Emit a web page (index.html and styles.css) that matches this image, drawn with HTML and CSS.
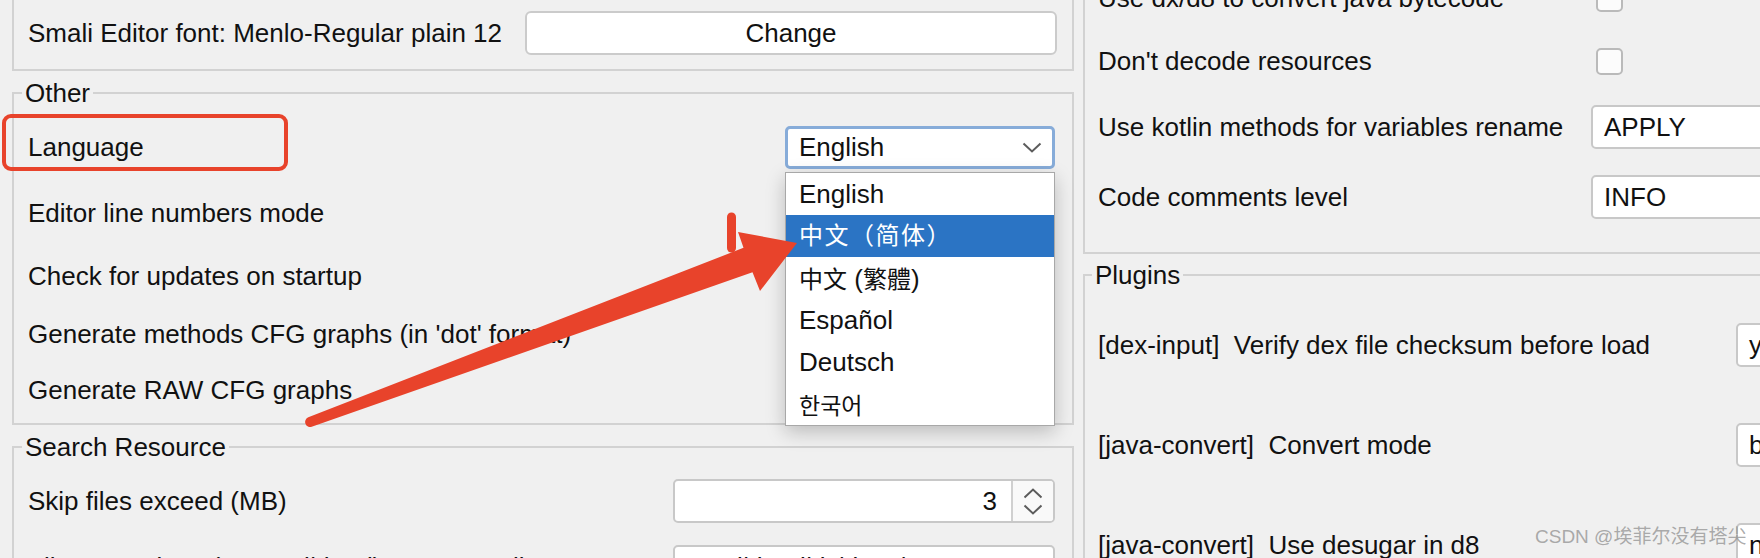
FILE: index.html
```html
<!DOCTYPE html>
<html lang="en">
<head>
<meta charset="utf-8">
<title>Preferences</title>
<link rel="stylesheet" href="styles.css">
</head>
<body>
<div class="screen">
  <div class="col-left">
    <div class="group group-cut">
      <div class="row h66">
        <span class="label">Smali Editor font: Menlo-Regular plain 12</span>
        <button class="btn">Change</button>
      </div>
    </div>

    <fieldset class="group">
      <legend>Other</legend>
      <div class="row h66">
        <span class="label">Language</span>
        <div class="combo-wrap">
          <div class="combo focus"><span>English</span>
            <svg class="chev" width="20" height="11" viewBox="0 0 20 11"><polyline points="1.5,1.5 10,9.5 18.5,1.5"/></svg>
          </div>
          <ul class="popup">
            <li>English</li>
            <li class="sel cjk wide" lang="zh-Hans">中文（简体）</li>
            <li lang="zh-Hant"><span class="cjk tc">中文</span> (<span class="cjk tc">繁體</span>)</li>
            <li>Español</li>
            <li>Deutsch</li>
            <li class="cjk kr" lang="ko">한국어</li>
          </ul>
        </div>
      </div>
      <div class="row h66">
        <span class="label">Editor line numbers mode</span>
        <div class="combo"></div>
      </div>
      <div class="row h60">
        <span class="label">Check for updates on startup</span>
        <span class="check"></span>
      </div>
      <div class="row h56">
        <span class="label">Generate methods CFG graphs (in 'dot' format)</span>
        <span class="check"></span>
      </div>
      <div class="row h56">
        <span class="label">Generate RAW CFG graphs</span>
        <span class="check"></span>
      </div>
    </fieldset>

    <fieldset class="group">
      <legend>Search Resource</legend>
      <div class="row h66">
        <span class="label">Skip files exceed (MB)</span>
        <div class="spinner">
          <span class="spin-field">3</span>
          <span class="spin-btns">
            <svg width="20" height="11" viewBox="0 0 20 11"><polyline points="1.5,9.5 10,1.5 18.5,9.5"/></svg>
            <svg width="20" height="11" viewBox="0 0 20 11"><polyline points="1.5,1.5 10,9.5 18.5,1.5"/></svg>
          </span>
        </div>
      </div>
      <div class="row h66">
        <span class="label">File Extensions (ex: .xml|.html), * means all</span>
        <div class="tf">.xml|.html|.js|.json|.txt</div>
      </div>
    </fieldset>
  </div>

  <div class="col-right">
    <div class="group group-top-r">
      <div class="rrow h60">
        <span class="label">Use dx/d8 to convert java bytecode</span>
        <span class="check"></span>
      </div>
      <div class="rrow h66">
        <span class="label">Don't decode resources</span>
        <span class="check"></span>
      </div>
      <div class="rrow h66">
        <span class="label">Use kotlin methods for variables rename</span>
        <div class="combo combo-r"><span>APPLY</span></div>
      </div>
      <div class="rrow h66 mt4">
        <span class="label">Code comments level</span>
        <div class="combo combo-r"><span>INFO</span></div>
      </div>
    </div>

    <fieldset class="group group-plugins">
      <legend>Plugins</legend>
      <div class="rrow h100">
        <span class="label">[dex-input]  Verify dex file checksum before load</span>
        <div class="combo combo-r"><span>yes</span></div>
      </div>
      <div class="rrow h100">
        <span class="label">[java-convert]  Convert mode</span>
        <div class="combo combo-r"><span>both</span></div>
      </div>
      <div class="rrow h100">
        <span class="label">[java-convert]  Use desugar in d8</span>
        <div class="combo combo-r"><span>no</span></div>
      </div>
    </fieldset>
  </div>
</div>

<div class="mark-box"></div>
<svg class="mark-arrow" width="1760" height="558" viewBox="0 0 1760 558">
  <path d="M308.3,417.3 L743.5,247.8 L738,232 L797,243 L760,291 L752.5,272.2 L311.7,426.7 A5,5 0 0 1 308.3,417.3 Z"/>
  <line x1="731.5" y1="217" x2="731.5" y2="248"/>
</svg>
<div class="watermark">CSDN @埃菲尔没有塔尖</div>
</body>
</html>
```

FILE: styles.css
```css
* { box-sizing: border-box; }

html, body { margin: 0; padding: 0; }

body {
  position: relative;
  width: 1760px;
  height: 558px;
  overflow: hidden;
  background: #f0f0f0;
  font-family: "Liberation Sans", Arial, "Noto Sans CJK SC", sans-serif;
  font-size: 26px;
  color: #111111;
}

.screen {
  display: flex;
  align-items: flex-start;
  padding-left: 12px;
}

.col-left { flex: none; width: 1062px; }
.col-right { flex: none; width: 900px; margin-left: 9px; margin-top: -32px; }

/* groups */
.group {
  margin: 0;
  min-width: 0;
  border: 2px solid #d2d2d2;
}
.group-cut {
  border-top: none;
  padding: 0 17px 3px 14px;
}
fieldset.group {
  margin-top: 9px;
  padding: 8px 17px 5px 14px;
}
legend {
  margin-left: -6px;
  padding: 0 3px;
  font-size: 26px;
  line-height: 26px;
}
.group-top-r {
  border-top: none;
  padding: 0 0 22px 13px;
}
fieldset.group-plugins {
  margin-top: 8px;
  padding: 7px 0 0 13px;
}

/* rows */
.row {
  display: flex;
  align-items: center;
  justify-content: space-between;
}
.rrow {
  display: grid;
  align-items: center;
  justify-items: start;
}
.group-top-r .rrow { grid-template-columns: 493px 1fr; }
.group-plugins .rrow { grid-template-columns: 638px 1fr; }

.h56 { height: 56px; }
.h60 { height: 60px; }
.h66 { height: 66px; }
.h100 { height: 100px; }
.mt4 { margin-top: 4px; }

.label { white-space: pre; }

/* controls */
.btn {
  width: 532px;
  height: 44px;
  margin-right: -2px;
  background: #ffffff;
  border: 2px solid #cbcbcb;
  border-radius: 6px;
  font: inherit;
  color: #111111;
  padding: 0;
}

.combo-wrap { position: relative; }

.combo {
  display: flex;
  align-items: center;
  justify-content: space-between;
  width: 270px;
  height: 43px;
  padding: 0 11px 0 12px;
  background: #ffffff;
  border: 2px solid #c8c8c8;
  border-radius: 5px;
  white-space: nowrap;
}
.combo.focus {
  border: 3px solid #87acd9;
  padding: 0 10px 0 11px;
}
.combo-r {
  width: 320px;
  height: 44px;
  padding-left: 11px;
}
.chev polyline, .spin-btns polyline {
  fill: none;
  stroke: #5c5c5c;
  stroke-width: 2;
}

.popup {
  position: absolute;
  left: 0;
  top: 46px;
  z-index: 5;
  width: 270px;
  margin: 0;
  padding: 0;
  list-style: none;
  background: #ffffff;
  border: 1px solid #a8a8a8;
  box-shadow: 0 6px 18px rgba(0, 0, 0, 0.22);
}
.popup li {
  height: 42px;
  line-height: 42px;
  padding-left: 13px;
  white-space: nowrap;
}
.popup li.sel {
  background: #2b74c4;
  color: #ffffff;
}
.cjk { font-size: 24px; }
.cjk.wide { letter-spacing: 1.5px; }
.cjk.tc { font-family: "Noto Sans CJK TC", sans-serif; }
.cjk.kr { font-size: 23px; font-family: "Noto Sans CJK KR", sans-serif; }

.check {
  display: block;
  width: 27px;
  height: 27px;
  margin-left: 5px;
  background: #fcfcfc;
  border: 2px solid #bababa;
  border-radius: 5px;
}

.spinner {
  display: flex;
  width: 382px;
  height: 44px;
  background: #ffffff;
  border: 2px solid #c8c8c8;
  border-radius: 5px;
  overflow: hidden;
}
.spin-field {
  flex: 1;
  text-align: right;
  line-height: 40px;
  padding-right: 14px;
  border-right: 2px solid #d0d0d0;
}
.spin-btns {
  display: flex;
  flex-direction: column;
  align-items: center;
  justify-content: center;
  gap: 5px;
  width: 40px;
  background: #f9f9f9;
}
.spin-btns svg { display: block; }

.tf {
  width: 382px;
  height: 44px;
  padding-left: 20px;
  line-height: 40px;
  background: #ffffff;
  border: 2px solid #c8c8c8;
  border-radius: 5px;
  white-space: nowrap;
  overflow: hidden;
}

/* annotations */
.mark-box {
  position: absolute;
  left: 2px;
  top: 114px;
  width: 286px;
  height: 57px;
  z-index: 10;
  border: 4.5px solid #e8432b;
  border-radius: 9px;
}
.mark-arrow {
  position: absolute;
  left: 0;
  top: 0;
  z-index: 10;
  pointer-events: none;
}
.mark-arrow path { fill: #e8432b; }
.mark-arrow line {
  stroke: #e8432b;
  stroke-width: 9;
  stroke-linecap: round;
}

.watermark {
  position: absolute;
  left: 1535px;
  top: 524px;
  z-index: 20;
  font-size: 19px;
  line-height: 26px;
  color: rgba(150, 150, 150, 0.8);
  white-space: nowrap;
}
```
